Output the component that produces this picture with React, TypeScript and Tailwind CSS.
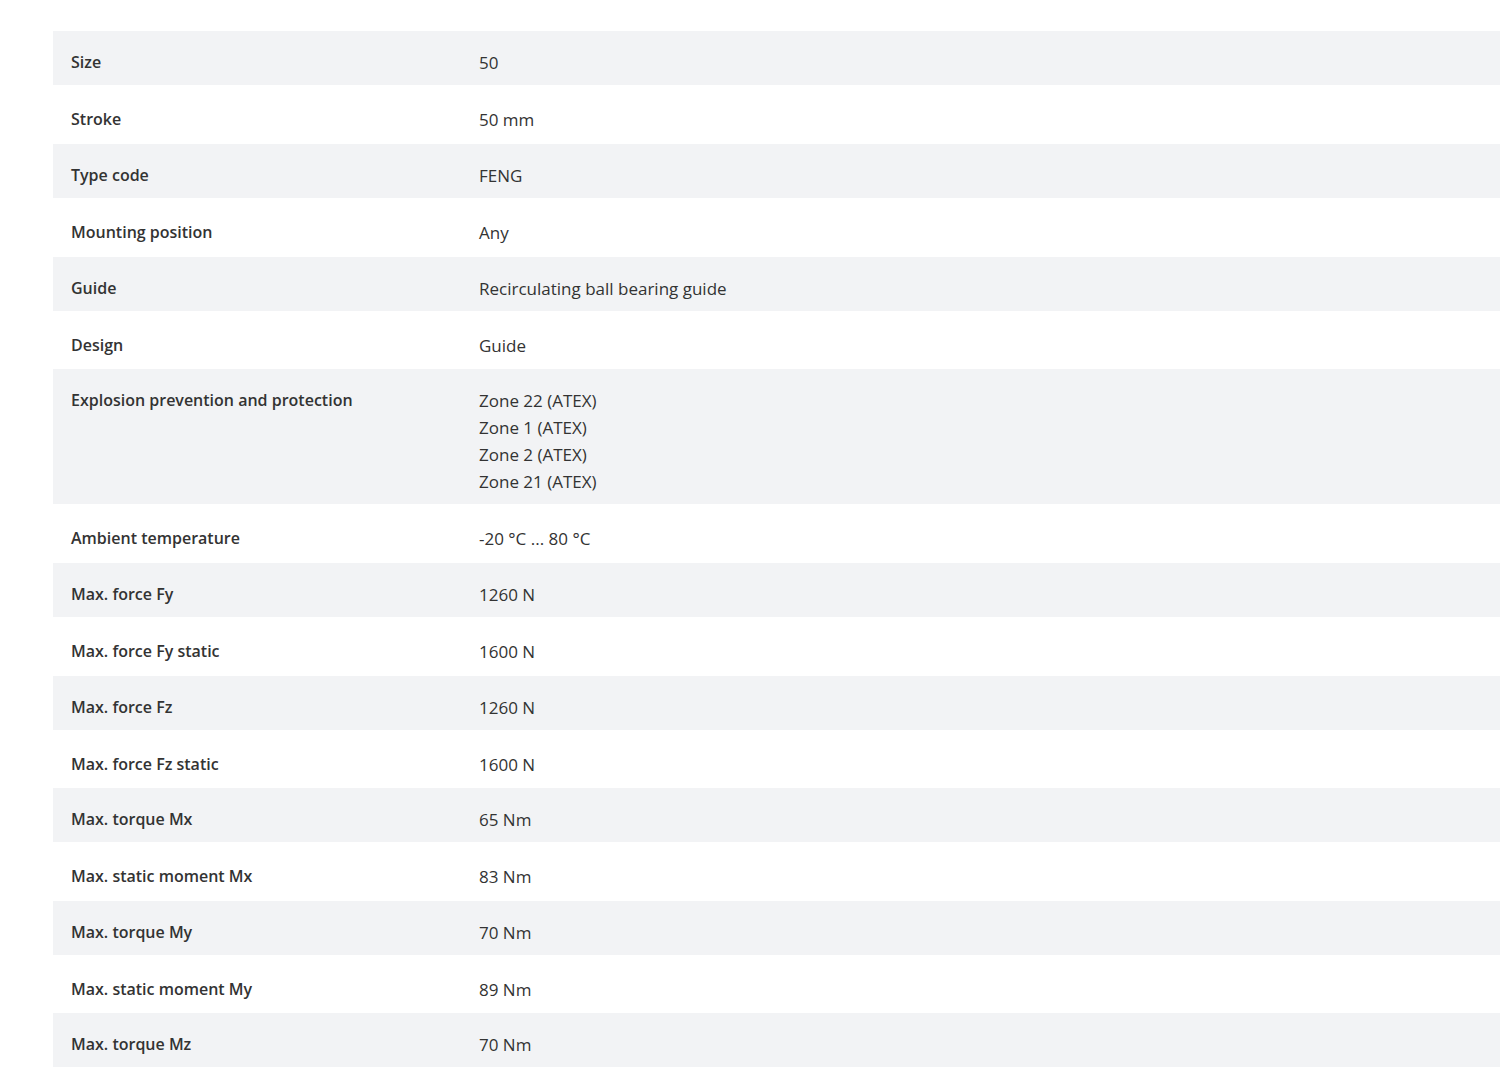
const rows: [string, string[]][] = [
  ["Size", ["50"]],
  ["Stroke", ["50 mm"]],
  ["Type code", ["FENG"]],
  ["Mounting position", ["Any"]],
  ["Guide", ["Recirculating ball bearing guide"]],
  ["Design", ["Guide"]],
  [
    "Explosion prevention and protection",
    ["Zone 22 (ATEX)", "Zone 1 (ATEX)", "Zone 2 (ATEX)", "Zone 21 (ATEX)"],
  ],
  ["Ambient temperature", ["-20 °C ... 80 °C"]],
  ["Max. force Fy", ["1260 N"]],
  ["Max. force Fy static", ["1600 N"]],
  ["Max. force Fz", ["1260 N"]],
  ["Max. force Fz static", ["1600 N"]],
  ["Max. torque Mx", ["65 Nm"]],
  ["Max. static moment Mx", ["83 Nm"]],
  ["Max. torque My", ["70 Nm"]],
  ["Max. static moment My", ["89 Nm"]],
  ["Max. torque Mz", ["70 Nm"]],
];

// white rows come out 58 or 59 px tall in the original
const shortRows = [5, 11, 15];

function rowClass(i: number) {
  if (i % 2 === 0) return "flex bg-[#f2f3f5] pt-[18px] pb-[9px]";
  if (shortRows.includes(i)) return "flex bg-white pt-[21px] pb-[10px]";
  return "flex bg-white pt-[21px] pb-[11px]";
}

export default function App() {
  return (
    <div className="bg-white min-h-screen pt-[31px] pl-[53px] font-['Open_Sans',sans-serif] text-[#333333]">
      <div className="flex flex-col">
        {rows.map(([label, values], i) => (
          <div key={label} className={rowClass(i)}>
            <div className="w-[426px] pl-[18px] text-[16px] leading-[27px] font-semibold">
              {label}
            </div>
            <div className="flex-1 text-[17px] leading-[27px]">
              {values.map((v) => (
                <div key={v}>{v}</div>
              ))}
            </div>
          </div>
        ))}
      </div>
    </div>
  );
}
